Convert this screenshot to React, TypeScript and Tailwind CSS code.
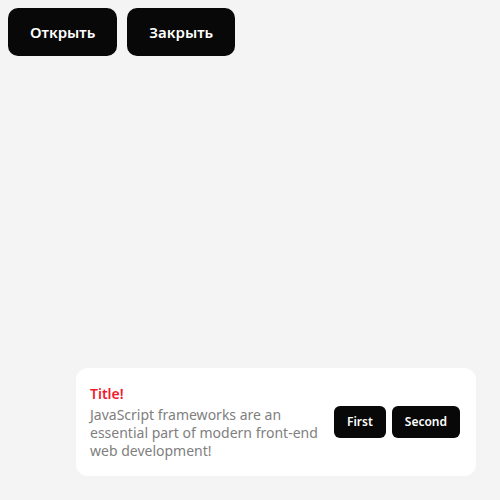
import { useState } from "react";

export default function App() {
  const [open, setOpen] = useState(true);

  return (
    <div className="min-h-screen bg-[#f4f4f4] p-2 font-['Noto_Sans',sans-serif]">
      <div className="flex gap-[10px]">
        <button
          type="button"
          onClick={() => setOpen(true)}
          className="h-12 rounded-[10px] bg-[#080808] px-[22px] text-[15px] font-semibold text-white"
        >
          Открыть
        </button>
        <button
          type="button"
          onClick={() => setOpen(false)}
          className="h-12 rounded-[10px] bg-[#080808] px-[22px] text-[15px] font-semibold text-white"
        >
          Закрыть
        </button>
      </div>

      {/* Toast */}
      {open && (
        <div className="fixed bottom-6 right-6 flex w-[400px] items-center gap-[10px] rounded-xl bg-white py-4 pl-[14px] pr-4">
          <div className="flex w-[235px] flex-col">
            <span className="text-[14px] font-semibold leading-[20px] text-[#ee1b2c]">
              Title!
            </span>
            <p className="mt-[2px] text-[14px] leading-[18px] text-[#808080]">
              JavaScript frameworks are an essential part of modern front-end
              web development!
            </p>
          </div>
          <div className="ml-auto flex gap-[6px]">
            <button
              type="button"
              className="h-8 rounded-md bg-[#080808] px-[13px] text-[12px] font-semibold text-white"
            >
              First
            </button>
            <button
              type="button"
              className="h-8 rounded-md bg-[#080808] px-[13px] text-[12px] font-semibold text-white"
            >
              Second
            </button>
          </div>
        </div>
      )}
    </div>
  );
}
